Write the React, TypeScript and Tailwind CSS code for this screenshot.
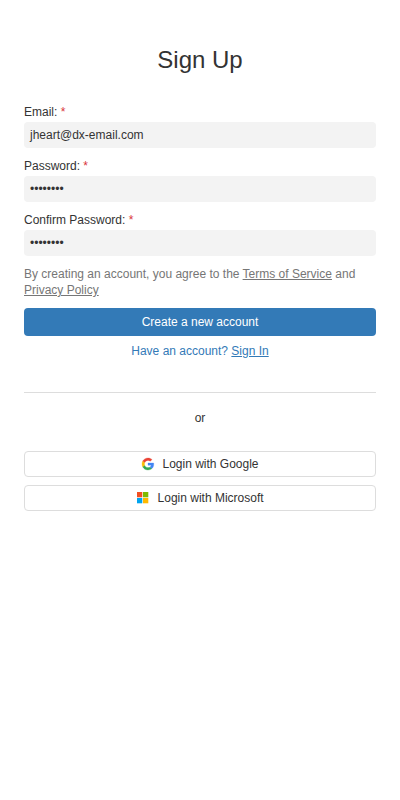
import React from 'react';

function Field({ label, value }: { label: string; value: string }) {
  return (
    <div className="mb-2.5">
      <div className="h-4 leading-4 mb-0.5">
        {label}: <span className="text-[#d9343a]">*</span>
      </div>
      <div className="h-[26px] rounded bg-[#f3f3f3] px-1.5 leading-[26px]">{value}</div>
    </div>
  );
}

function GoogleLogo() {
  return (
    <svg width="14" height="14" viewBox="-4 -4 56 56" strokeWidth="1.2" className="shrink-0">
      <path fill="#EA4335" stroke="#EA4335" d="M24 9.5c3.54 0 6.71 1.22 9.21 3.6l6.85-6.85C35.9 2.38 30.47 0 24 0 14.62 0 6.51 5.38 2.56 13.22l7.98 6.19C12.43 13.72 17.74 9.5 24 9.5z" />
      <path fill="#34A853" stroke="#34A853" d="M24 48c6.48 0 11.93-2.13 15.89-5.81l-7.73-6c-2.15 1.45-4.92 2.3-8.16 2.3-6.26 0-11.57-4.22-13.47-9.91l-7.98 6.19C6.51 42.62 14.62 48 24 48z" />
      <path fill="#FBBC05" stroke="#FBBC05" d="M10.53 28.59c-.48-1.45-.76-2.99-.76-4.59s.27-3.14.76-4.59l-7.98-6.19C.92 16.46 0 20.12 0 24c0 3.88.92 7.54 2.56 10.78l7.97-6.19z" />
      <path fill="#4285F4" stroke="#4285F4" d="M46.98 24.55c0-1.57-.15-3.09-.38-4.55H24v9.02h12.94c-.58 2.96-2.26 5.48-4.78 7.18l7.73 6c4.51-4.18 7.09-10.36 7.09-17.65z" />
    </svg>
  );
}

function MicrosoftLogo() {
  return (
    <svg width="14" height="14" viewBox="0 0 14 14" className="shrink-0">
      <path fill="#F25022" d="M1 1h5.3v5.3H1z" />
      <path fill="#7FBA00" d="M7 1h5.3v5.3H7z" />
      <path fill="#00A4EF" d="M1 7h5.3v5.3H1z" />
      <path fill="#FFB900" d="M7 7h5.3v5.3H7z" />
    </svg>
  );
}

export default function App() {
  return (
    <div className="h-[800px] bg-white px-6 pt-10 text-xs text-[#333] font-['Liberation_Sans',Arial,sans-serif]">
      <h1 className="h-10 leading-10 text-center text-2xl mb-6">Sign Up</h1>
      <Field label="Email" value="jheart@dx-email.com" />
      <Field label="Password" value="••••••••" />
      <Field label="Confirm Password" value="••••••••" />
      <p className="leading-4 text-[#767676] mb-2.5">
        By creating an account, you agree to the <a className="underline">Terms of Service</a> and <a className="underline">Privacy Policy</a>
      </p>
      <button className="block w-full h-7 rounded bg-[#337ab7] text-white">Create a new account</button>
      <div className="mt-[7px] leading-4 text-center text-[#337ab7]">
        Have an account? <a className="underline">Sign In</a>
      </div>
      <hr className="mt-[33px] border-[#ddd]" />
      <div className="mt-[17px] leading-4 text-center">or</div>
      <button className="mt-[25px] flex w-full h-[26px] items-center justify-center gap-[7px] rounded border border-[#ddd]">
        <GoogleLogo />
        <span>Login with Google</span>
      </button>
      <button className="mt-2 flex w-full h-[26px] items-center justify-center gap-[7.5px] rounded border border-[#ddd] pr-[0.4px]">
        <MicrosoftLogo />
        <span>Login with Microsoft</span>
      </button>
    </div>
  );
}
